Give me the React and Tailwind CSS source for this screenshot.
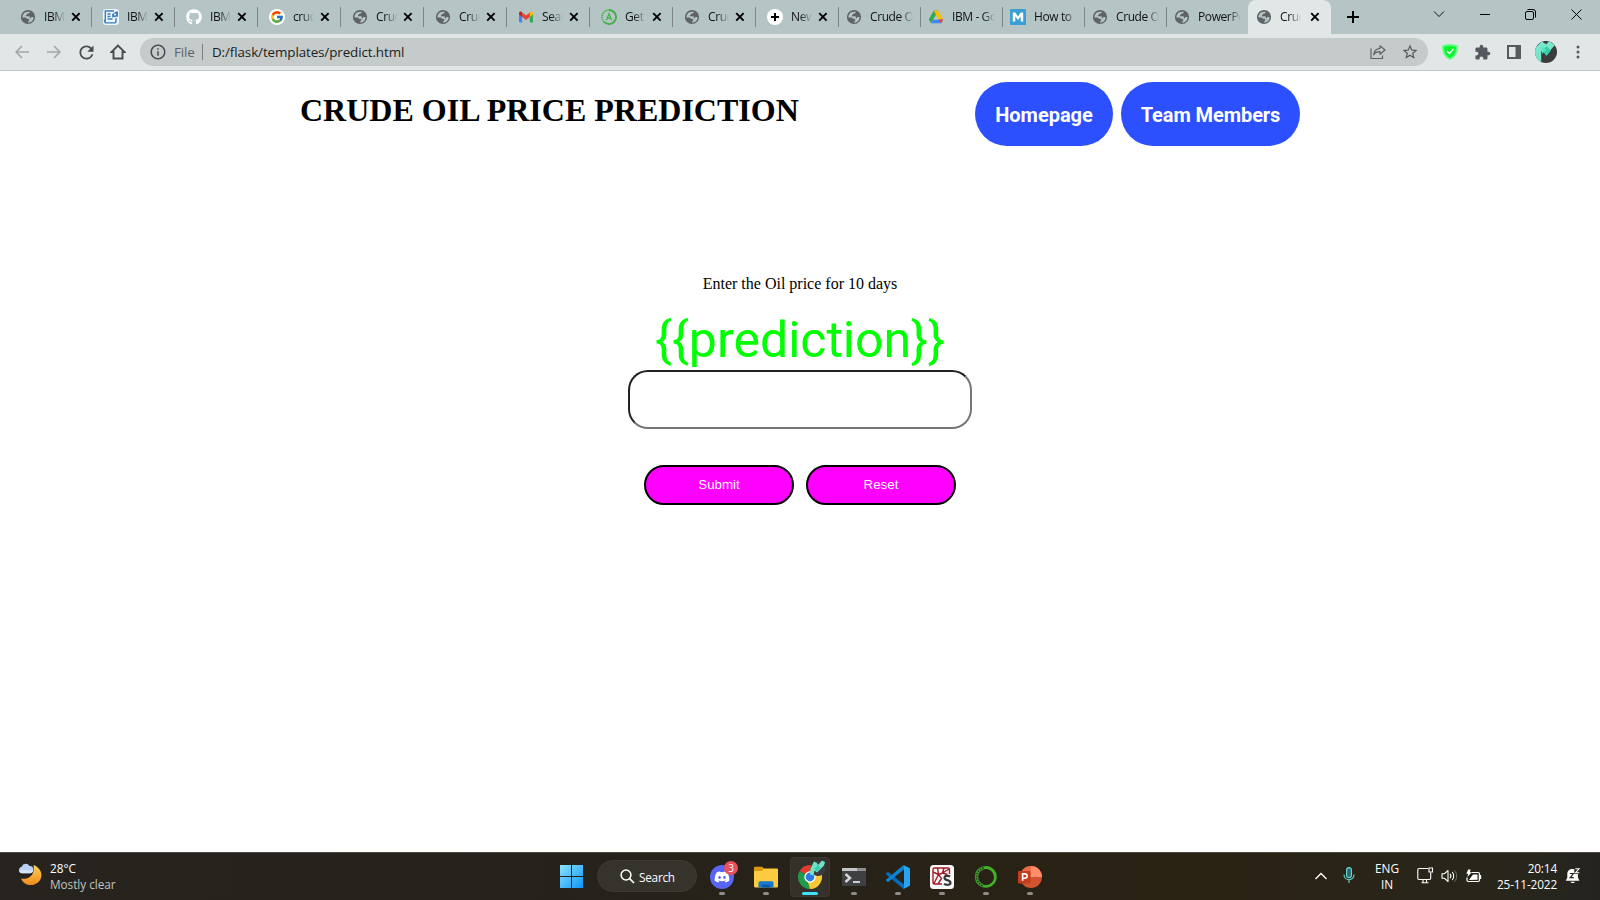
import React from "react";
import { FcGoogle } from "react-icons/fc";
import { FaGithub, FaDiscord } from "react-icons/fa";
import { MdExtension, MdStarBorder, MdRefresh, MdOutlineInfo } from "react-icons/md";

const Globe = () => (
  <svg width="16" height="16" viewBox="0 0 16 16">
    <circle cx="8" cy="8" r="7.1" fill="#5f6368" />
    <path
      d="M9.600 2.800C9.800 3.900 9 4.600 8.200 4.600H7.300C7.300 5.600 6.800 6 6 6V7.200H8.700C9.500 7.200 9.900 7.700 9.900 8.500V9.200C10.900 9.200 11.300 8.700 11.300 7.900H13.500C13.700 11 11.300 13.500 8.100 13.600V12.300C8.900 12.200 9.300 11.700 9.300 10.900C9.300 10.100 8.700 9.700 7.900 9.700H7.200C6.500 9.700 6.100 9.300 6.100 8.600H2.500C2.200 5.200 5 2 9.600 2.800Z"
      fill="#b5c5c5"
    />
  </svg>
);

const Scroll = () => (
  <svg width="16" height="16" viewBox="0 0 16 16">
    <rect width="16" height="16" rx="3" fill="#eef5fb" />
    <path d="M11 2H2.3v9.5H1.5c0 1.6.8 2.4 2 2.4h7.7c1.2 0 1.8-.8 1.8-2V9" fill="none" stroke="#3b7fc0" strokeWidth="1.4" />
    <path d="M4.5 5h3M4.5 7.5h3M4.5 10h5" stroke="#3b7fc0" strokeWidth="1.3" />
    <path d="M9 5.2L13 2.4h2v5.4h-2L9.3 8.5z" fill="#3b7fc0" />
    <circle cx="12" cy="5.4" r="1" fill="#fff" />
  </svg>
);

const Github = () => (
  <FaGithub size={16} color="#fff" />
);

const Google = () => (
  <span className="flex size-4 items-center justify-center rounded-full bg-white">
    <FcGoogle size={14} />
  </span>
);

const Gmail = () => (
  <svg width="16" height="16" viewBox="0 0 16 16">
    <path d="M1 4v8.5c0 .6.4 1 1 1h2.2V7z" fill="#4285f4" />
    <path d="M15 4v8.5c0 .6-.4 1-1 1h-2.2V7z" fill="#34a853" />
    <path d="M11.8 4v4L15 5.6V4.2c0-1.6-1.6-2.1-2.6-1.3z" fill="#fbbc04" />
    <path d="M4.2 8V3.6L8 6.5l3.8-2.9V8L8 10.9z" fill="#ea4335" />
    <path d="M1 4.2v1.4L4.2 8V3.6l-.6-.7C2.6 2.1 1 2.6 1 4.2z" fill="#c5221f" />
  </svg>
);

const CircleA = () => (
  <svg width="16" height="16" viewBox="0 0 16 16">
    <path d="M8 1a7 7 0 1 1-5 11.9" fill="none" stroke="#43b049" strokeWidth="1.9" />
    <path d="M3 12.9A7 7 0 0 1 8 1" fill="none" stroke="#43b049" strokeWidth="1.7" strokeDasharray="1.3 .8" />
    <path d="M5.4 11.3L8 4.7l2.6 6.6M6.4 9.2h3.2" fill="none" stroke="#43b049" strokeWidth="1.2" />
  </svg>
);

const PlusDot = () => (
  <svg width="16" height="16" viewBox="0 0 16 16">
    <circle cx="8" cy="8" r="8" fill="#fff" />
    <path d="M8 4v8M4 8h8" stroke="#000" strokeWidth="2" />
  </svg>
);

const Drive = () => (
  <svg width="16" height="16" viewBox="0 0 16 16">
    <path d="M5.6 1.7h4.8L8 5.9z" fill="#188038" />
    <path d="M10.4 1.7l4.9 8.7h-4.8L5.6 1.7z" fill="#fbbc04" />
    <path d="M5.6 1.7L8 5.9 3 14.3.8 10.4z" fill="#34a853" />
    <path d="M5.4 10.4h9.9L13 14.3H3z" fill="#4285f4" />
    <path d="M10.5 10.4h4.8L13 14.3z" fill="#ea4335" />
    <path d="M8 6.3l2.4 4.1H5.6z" fill="#b5c5c5" />
  </svg>
);

const MBox = () => (
  <svg width="16" height="16" viewBox="0 0 16 16">
    <rect width="16" height="16" fill="#3b9fd4" />
    <path d="M2.8 12.6V3.6h2.5L8 7.4l2.7-3.8h2.5v9h-2.5V7.6L8 11.1 5.3 7.6v5z" fill="#fff" />
  </svg>
);

const TABS = [
  ["IBM-", Globe, true],
  ["IBM-", Scroll, true],
  ["IBM-", Github, true],
  ["crude", Google, true],
  ["Crud", Globe, true],
  ["Crud", Globe, true],
  ["Sear", Gmail, true],
  ["Get s", CircleA, true],
  ["Crud", Globe, true],
  ["New", PlusDot, true],
  ["Crude Oil", Globe, false],
  ["IBM - Go", Drive, false],
  ["How to", MBox, false],
  ["Crude Oil", Globe, false],
  ["PowerPo", Globe, false],
];

const TabClose = () => (
  <svg width="10" height="10" viewBox="0 0 10 10" className="shrink-0">
    <path d="M1.2 1.2l7.4 7.4M8.6 1.2L1.2 8.6" stroke="#000" strokeWidth="1.9" />
  </svg>
);

const Title = ({ wide, children }) => (
  <span
    className={
      (wide ? "w-[43px]" : "w-[21px]") +
      " ml-2 shrink-0 overflow-hidden whitespace-nowrap text-[12px] leading-4 tracking-[-0.4px] text-[#111] [mask-image:linear-gradient(to_right,black_calc(100%-12px),transparent)]"
    }
  >
    {children}
  </span>
);

function Tab({ title, Icon, close }) {
  return (
    <div
      className={
        (close ? "w-[83px] pl-[11px]" : "w-[82px] pl-[7px]") +
        " flex h-full shrink-0 items-center"
      }
    >
      <span className="size-4 shrink-0"><Icon /></span>
      <Title wide={!close}>{title}</Title>
      {close && <span className="ml-[6px]"><TabClose /></span>}
      <span className="ml-auto h-5 w-px bg-[#7b8788]" />
    </div>
  );
}

function TabStrip() {
  return (
    <div className="flex h-[34px] bg-[#b5c5c5] pl-[9px]">
      {TABS.map(([t, I, c], i) => (
        <Tab key={i} title={t} Icon={I} close={c} />
      ))}
      <div className="-ml-[1px] flex h-full w-[83px] shrink-0 items-center rounded-t-lg bg-[#e1e6e6] pl-2">
        <Globe />
        <Title>Crude</Title>
        <span className="ml-[9px]"><TabClose /></span>
      </div>
      <svg width="12" height="12" viewBox="0 0 12 12" className="ml-4 mt-[11px]">
        <path d="M6 0v12M0 6h12" stroke="#000" strokeWidth="2" />
      </svg>
      <div className="ml-auto flex h-7">
        <span className="flex w-[46px] items-center justify-center">
          <svg width="12" height="8" viewBox="0 0 12 8"><path d="M1 1.5l5 5 5-5" fill="none" stroke="#111" /></svg>
        </span>
        <span className="flex w-[46px] items-center justify-center">
          <svg width="10" height="10"><path d="M0 5.5h10" stroke="#000" /></svg>
        </span>
        <span className="flex w-[46px] items-center justify-center">
          <svg width="11" height="11" viewBox="0 0 11 11" className="-ml-px">
            <rect x=".5" y="2.5" width="8" height="8" rx="1.5" fill="none" stroke="#000" />
            <path d="M2.5.5H8A2.5 2.5 0 0 1 10.500 3v5.500" fill="none" stroke="#000" />
          </svg>
        </span>
        <span className="flex w-[46px] items-center justify-center">
          <svg width="11" height="11" viewBox="0 0 11 11" className="-ml-px"><path d="M.5.5l10 10M10.500.5L.5 10.500" stroke="#000" /></svg>
        </span>
      </div>
    </div>
  );
}

function Toolbar() {
  return (
    <div className="flex h-[37px] items-center border-b border-[#c0c6c9] bg-[#e1e6e6]">
      <div className="flex w-[140px] shrink-0 items-center pl-[6px]">
        <span className="flex w-8 justify-center">
          <svg width="14" height="14" viewBox="0 0 14 14"><path d="M14 7H1.500M7 1L1.200 7 7 13" fill="none" stroke="#a4a8aa" strokeWidth="1.700" /></svg>
        </span>
        <span className="flex w-8 justify-center">
          <svg width="14" height="14" viewBox="0 0 14 14"><path d="M0 7h12.500M7 1l5.800 6L7 13" fill="none" stroke="#a4a8aa" strokeWidth="1.700" /></svg>
        </span>
        <span className="flex w-8 justify-center"><MdRefresh size={21} color="#494c4f" /></span>
        <span className="flex w-8 justify-center">
          <svg width="16" height="16" viewBox="0 0 16 16"><path d="M8 1.500L1.500 8H3.500v6.500h9V8h2z" fill="none" stroke="#494c4f" strokeWidth="1.900" /></svg>
        </span>
      </div>
      <div className="flex h-7 w-[1288px] shrink-0 items-center rounded-full bg-[#c5caca] pl-[9px] text-[13.4px] tracking-[-0.1px]">
        <MdOutlineInfo size={18} color="#484b4e" />
        <span className="ml-[7px] w-[28px] text-[#5f6368]">File</span>
        <span className="h-4 w-px bg-[#7c8082]" />
        <span className="ml-[9px] whitespace-nowrap text-[#1c1e20]">D:/flask/templates/predict.html</span>
        <svg width="16" height="16" viewBox="0 0 16 16" className="ml-auto">
          <path d="M1 4.500V14.500h11.500V11.500" fill="none" stroke="#5f6368" strokeWidth="1.200" />
          <path d="M10 1.800L15 6l-5 4.300V7.700C7 7.700 5 8.600 3.700 10.800 4 7.500 6 4.700 10 4.300z" fill="none" stroke="#5f6368" strokeWidth="1.200" strokeLinejoin="round" />
        </svg>
        <MdStarBorder size={18} color="#55585b" className="ml-[15px] mr-[9px]" />
      </div>
      <div className="flex flex-1 items-center pl-[6px]">
        <span className="flex w-8 justify-center">
          <svg width="16" height="16" viewBox="0 0 16 16">
            <path d="M8 .3C5.500.3 2.500.8.2 1.700 0 8 2 13 8 15.900 14 13 16 8 15.800 1.700 13.500.8 10.500.3 8 .3z" fill="#5dfc7c" />
            <path d="M8 2C6 2 4 2.300 2 2.900 2 7.500 3.500 11.500 8 14 12.500 11.500 14 7.500 14 2.900 12 2.300 10 2 8 2z" fill="#06f52f" />
            <path d="M5 7.200l2.500 2.300L11.500 5" fill="none" stroke="#fff" strokeWidth="1.500" />
          </svg>
        </span>
        <span className="flex w-8 justify-center"><MdExtension size={17} color="#56595d" /></span>
        <span className="flex w-8 justify-center">
          <svg width="14" height="14" viewBox="0 0 14 14"><rect x="1" y="1" width="12" height="12" fill="none" stroke="#56595d" strokeWidth="2" /><path d="M8.500 1h4.500v12H8.500z" fill="#56595d" /></svg>
        </span>
        <span className="flex w-8 justify-center"><Avatar size={22} /></span>
        <span className="flex w-8 justify-center">
          <svg width="4" height="14" viewBox="0 0 4 14"><circle cx="2" cy="2" r="1.500" fill="#55585b" /><circle cx="2" cy="7" r="1.500" fill="#55585b" /><circle cx="2" cy="12" r="1.500" fill="#55585b" /></svg>
        </span>
      </div>
    </div>
  );
}

const Avatar = ({ size }) => (
  <svg width={size} height={size} viewBox="0 0 22 22">
    <defs><clipPath id="avatar"><circle cx="11" cy="11" r="11" /></clipPath></defs>
    <g clipPath="url(#avatar)">
      <rect width="22" height="22" fill="#3c3b3d" />
      <path d="M0 7l7-7 5 5-5.500 5V22H0z" fill="#79e6cc" />
      <path d="M7 5l5-5 2 0 6 4-8 9-5-4z" fill="#79e6cc" />
      <path d="M8 0h6l-2.700 3.500z" fill="#3c3b3d" />
      <path d="M11.500 5L16 9.500l-4.500 5.500L7 9.500z" fill="#35d0aa" />
      <path d="M7 5l4 4-4 4z" fill="#5adfbf" />
      <path d="M6.700 11v11" stroke="#333" strokeWidth=".7" />
    </g>
  </svg>
);

function Page() {
  return (
    <main className="flex flex-1 flex-col bg-white">
      <header className="mx-auto flex w-[1000px] justify-between pt-[11px]">
        <h1 className="pt-[10px] font-['Liberation_Serif',serif] text-[32px] font-bold leading-[37px] text-black">
          CRUDE OIL PRICE PREDICTION
        </h1>
        <nav className="flex gap-2 font-[Roboto,sans-serif] text-[20px] font-bold tracking-[-0.02px] text-white">
          <a className="flex h-16 w-[138px] items-center justify-center rounded-[32px] bg-[#2d50ff] pt-px">Homepage</a>
          <a className="flex h-16 w-[179px] items-center justify-center rounded-[32px] bg-[#2d50ff] pt-px tracking-[-0.08px]">Team Members</a>
        </nav>
      </header>
      <form className="mt-[129px] flex flex-col items-center">
        <p className="font-['Liberation_Serif',serif] text-[16px] leading-[18px] text-black">Enter the Oil price for 10 days</p>
        <div className="mt-[19px] font-[Roboto,sans-serif] text-[50px] leading-[56px] text-[#00ff00]">{"{{prediction}}"}</div>
        <div className="mt-[2px] h-[59px] w-[344px] rounded-[20px] border-2 border-b-[#767676] border-l-[#212121] border-r-[#767676] border-t-[#212121] bg-white" />
        <div className="mt-9 flex gap-3 font-['Liberation_Sans',sans-serif] text-[13.333px] text-white">
          <button type="button" className="h-10 w-[150px] rounded-[20px] border-2 border-black bg-[#ff00ff]">Submit</button>
          <button type="button" className="h-10 w-[150px] rounded-[20px] border-2 border-black bg-[#ff00ff]">Reset</button>
        </div>
      </form>
    </main>
  );
}

const TaskApp = ({ active, children }) => (
  <div
    className={
      (active ? "border-[#3c3831] bg-[#34312a]" : "border-transparent") +
      " mx-[2px] flex h-10 w-10 flex-col items-center rounded border"
    }
  >
    <span className="mt-[7px] flex size-6 items-center justify-center">{children}</span>
    <span className={(active ? "w-4 bg-[#3fe3fb]" : "w-[6px] bg-[#8f8d89]") + " mt-[3px] h-[3px] rounded-full"} />
  </div>
);

const Chrome = () => (
  <svg width="24" height="24" viewBox="0 0 24 24" className="overflow-visible">
    <path d="M12 12L1.600 6A12 12 0 0 1 22.400 6z" fill="#e33b2e" />
    <path d="M12 12L22.400 6A12 12 0 0 1 12 24z" fill="#fcc934" />
    <path d="M12 12v12A12 12 0 0 1 1.600 6z" fill="#1e9a4a" />
    <path d="M12 6.500h10.700l-6 8.200z" fill="#fcc934" />
    <path d="M16.800 14.700L12 24l-2-7z" fill="#fcc934" />
    <circle cx="12" cy="12" r="5.700" fill="#fff" />
    <circle cx="12" cy="12" r="4.400" fill="#2a7be8" />
    <circle cx="20" cy="3.500" r="7.500" fill="#3c3b3d" />
    <path d="M12.500 3.500L16-3.500l3 1.500 1 2 4-4.500 3 1.500-1 3.500-7 7-2.500-2-1 5-3.500-1z" fill="#6fe3c8" />
    <path d="M20 0l2.500 2.500-3.500 4-2.500-3z" fill="#35cfa9" />
  </svg>
);

const Folder = () => (
  <svg width="24" height="24" viewBox="0 0 24 24">
    <path d="M0 3c0-.8.5-1.300 1.300-1.300H8c1 0 1.500 1.700 2.500 2.300V8H0z" fill="#d99a12" />
    <path d="M0 6h8l2-2.500h12.700c.8 0 1.300.5 1.300 1.300v16.500c0 .8-.5 1.200-1.300 1.200H1.300C.5 22.500 0 22 0 21.300z" fill="#fccb40" />
    <path d="M4.500 22.500V18c0-1 .7-1.800 1.800-1.800h11.400c1.100 0 1.800.8 1.800 1.800v4.500z" fill="#1478cf" />
    <path d="M8 22.500v-2c0-.5.300-.8.800-.8h6.400c.5 0 .8.300.8.800v2z" fill="#0b57a4" />
  </svg>
);

const TerminalIcon = () => (
  <svg width="24" height="24" viewBox="0 0 24 24">
    <rect y="3" width="24" height="18" rx="1" fill="#3f4043" />
    <path d="M0 6V4c0-.6.400-1 1-1h22c.6 0 1 .4 1 1v2z" fill="#8d8f93" />
    <path d="M0 6V4c0-.6.400-1 1-1h14v3z" fill="#c4c5c8" />
    <path d="M3.500 9l4.500 4-4.500 4" fill="none" stroke="#d8d8d8" strokeWidth="2.400" />
    <path d="M11 17h7" stroke="#fff" strokeWidth="1.500" />
  </svg>
);

const Code = () => (
  <svg width="24" height="24" viewBox="0 0 24 24">
    <path d="M0 8.600L1.500 7.300c.3-.3.700-.3 1 0L18 19.500v4.300c-.5 0-1-.2-1.300-.5L.2 9.500c-.3-.3-.3-.6-.2-.9z" fill="#0a6cb8" />
    <path d="M0 15.400l1.500 1.300c.3.300.7.300 1 0L18 4.500V.2c-.5 0-1 .2-1.300.5L.2 14.500c-.3.300-.3.600-.2.900z" fill="#0f84cf" />
    <path d="M17 .3c.3-.2.700-.2 1 0l5 2.400c.6.300 1 .8 1 1.400v15.800c0 .6-.4 1.100-1 1.400l-5 2.400c-.3.200-.7.200-1 0 .7-.2 1-.700 1-1.400V1.700c0-.7-.3-1.200-1-1.400z" fill="#2ba3ee" />
  </svg>
);

const Spyder = () => (
  <svg width="24" height="24" viewBox="0 0 24 24">
    <rect width="24" height="24" rx="3.500" fill="#fafafa" />
    <path d="M3 4.500C3 3.500 3.500 3 4.500 3H18c1 0 1.500.5 1.500 1.500V9M12 19H4.500C3.500 19 3 18.500 3 17.500V4.500M7.500 3l1 6.500L4 18.500M14 3l-1.500 5L19 4M8.500 9.500L3 7M8.500 9.500l4-1.500 5 1.500M8.500 9.500L11.500 13.500 8 19" fill="none" stroke="#a51c24" strokeWidth="1.400" />
    <path d="M20 11.500c-1.500-1-5.500-1-5.500 1.400 0 2.800 6 1.600 6 4.800 0 2.600-4.500 2.500-6.500 1.200" fill="none" stroke="#34383c" strokeWidth="2.200" />
  </svg>
);

const Anaconda = () => (
  <svg width="24" height="24" viewBox="0 0 24 24">
    <path d="M9.500 2.900A9.400 9.400 0 1 1 8.500 20.700" fill="none" stroke="#43b02a" strokeWidth="2.800" />
    <path d="M9.500 2.900A9.400 9.400 0 0 0 8.500 20.700" fill="none" stroke="#3d9a29" strokeWidth="3.400" />
    <path d="M9.500 2.900A9.400 9.400 0 0 0 8.500 20.700" fill="none" stroke="#26251c" strokeWidth="1.300" strokeDasharray="1.200 1.500" />
  </svg>
);

const PowerPoint = () => (
  <svg width="24" height="24" viewBox="0 0 24 24">
    <circle cx="13" cy="12" r="11" fill="#d35230" />
    <path d="M13 1a11 11 0 0 0-11 11h11z" fill="#ed6c47" />
    <path d="M13 1a11 11 0 0 1 11 11H13z" fill="#ff8f6b" />
    <rect y="6" width="12.500" height="12.500" rx="1.200" fill="#c43e1c" />
    <path d="M4.600 15.700V8.900h2.200c3.200 0 3.200 4.300 0 4.300H4.600" fill="none" stroke="#fff" strokeWidth="1.600" />
  </svg>
);

function Taskbar() {
  return (
    <footer className="flex h-12 items-center border-t border-[#4a4841] bg-[linear-gradient(to_right,#27241f,#25221c_35%,#2a2213_75%,#28261c_95%,#24231f)] text-[11.8px] leading-4 text-white">
      <div className="flex w-[558px] items-center pl-[18px]">
        <svg width="24" height="24" viewBox="0 0 24 24" className="-mt-1">
          <defs><linearGradient id="moon" x2="0" y2="1"><stop stopColor="#ffd25a" /><stop offset="1" stopColor="#f08a1d" /></linearGradient></defs>
          <path d="M15.500 2c8 3 10.500 11.500 5 17-5 5-14.500 4-17.500-3.500 6 1.500 14.500-2 12.500-13.500z" fill="url(#moon)" />
          <path d="M4 10.200a3.300 3.300 0 0 1-.3-6.500A4.300 4.300 0 0 1 11.500 3a3.600 3.600 0 0 1 .5 7.200z" fill="#b8d0f4" />
          <path d="M4 10.200a3.300 3.300 0 0 1-3-3h14a3.300 3.300 0 0 1-3 3z" fill="#d5e4fb" />
        </svg>
        <div className="-mt-[2px] ml-2">
          <div>28°C</div>
          <div className="tracking-[-0.05px] text-[#c3c2c0]">Mostly clear</div>
        </div>
      </div>
      <svg width="23" height="23" viewBox="0 0 23 23" className="ml-[2px]">
        <defs><linearGradient id="win" x2="1" y2="1"><stop stopColor="#8be3fd" /><stop offset="1" stopColor="#0e94f5" /></linearGradient></defs>
        <path d="M0 0h11v11H0zM12 0h11v11H12zM0 12h11v11H0zM12 12h11v11H12z" fill="url(#win)" />
      </svg>
      <div className="-mt-px ml-[14px] mr-[3px] flex h-8 w-[100px] items-center rounded-full border border-[#3d3a33] bg-[#36332d] pl-[22px]">
        <svg width="15" height="15" viewBox="0 0 15 15"><circle cx="6" cy="6" r="4.900" fill="none" stroke="#fff" strokeWidth="1.500" /><path d="M9.600 9.600l4.400 4.400" stroke="#fff" strokeWidth="1.700" /></svg>
        <span className="ml-[4px] mt-px tracking-[-0.25px]">Search</span>
      </div>
      <TaskApp>
        <span className="relative flex size-6 items-center justify-center rounded-full bg-[#5865f2]">
          <FaDiscord size={16} color="#fff" />
          <span className="absolute -right-1 -top-1 flex size-[14px] items-center justify-center rounded-full bg-[#e8505b] text-[10px] leading-none">3</span>
        </span>
      </TaskApp>
      <TaskApp><Folder /></TaskApp>
      <TaskApp active><Chrome /></TaskApp>
      <TaskApp><TerminalIcon /></TaskApp>
      <TaskApp><Code /></TaskApp>
      <TaskApp><Spyder /></TaskApp>
      <TaskApp><Anaconda /></TaskApp>
      <TaskApp><PowerPoint /></TaskApp>
      <div className="-mt-[2px] ml-auto flex items-center">
        <svg width="12" height="8" viewBox="0 0 12 8"><path d="M.5 7L6 1.500 11.500 7" fill="none" stroke="#fff" strokeWidth="1.300" /></svg>
        <svg width="12" height="17" viewBox="0 0 12 17" className="ml-4">
          <rect x="3.600" y=".6" width="4.800" height="10" rx="2.400" fill="#2b6a69" stroke="#66dcd7" strokeWidth="1.100" />
          <path d="M1 7.500c0 7 10 7 10 0M6 12.900V16" fill="none" stroke="#66dcd7" strokeWidth="1.100" />
        </svg>
        <div className="ml-[18px] w-[28px] text-center"><div>ENG</div><div>IN</div></div>
        <svg width="17" height="17" viewBox="0 0 17 17" className="ml-4">
          <path d="M11 1.500H2C1.300 1.500.8 2 .8 2.700v8.600c0 .7.500 1.200 1.200 1.200h10.500c.7 0 1.200-.5 1.200-1.200V9M4.500 15.700h7M6 12.500v3M9.500 12.500v3M13.700 5.500v4" fill="none" stroke="#fff" strokeWidth="1.100" />
          <path d="M12 1h3.500v4H12z" fill="#29241a" stroke="#fff" strokeWidth="1.100" />
        </svg>
        <svg width="17" height="14" viewBox="0 0 17 14" className="ml-[7px]">
          <path d="M1 4.700h2.500L7 1.500v11L3.500 9.300H1z" fill="none" stroke="#fff" strokeWidth="1.100" strokeLinejoin="round" />
          <path d="M9 4.800c1 1.200 1 3.200 0 4.400M11.200 3c2 2.200 2 5.800 0 8" fill="none" stroke="#fff" strokeWidth="1.100" />
          <path d="M13.400 1.300c3 3.300 3 8.100 0 11.400" fill="none" stroke="#77746b" strokeWidth="1" />
        </svg>
        <svg width="17" height="14" viewBox="0 0 17 14" className="ml-[7px]">
          <path d="M6.500 3.500h6.700c.7 0 1.200.5 1.200 1.200v6.600c0 .7-.5 1.200-1.200 1.200H3.200c-.7 0-1.200-.5-1.200-1.200V8.500" fill="none" stroke="#fff" strokeWidth="1.200" />
          <path d="M4 11L8 5.500h4.500v5.300zM15 6h1.200v4H15zM3.200.5h2.300L5 3.200h1.800L2.300 8l.9-3.200H1.300z" fill="#fff" />
        </svg>
        <div className="ml-[15px] w-[60px] whitespace-nowrap text-right tracking-[-0.15px]"><div>20:14</div><div className="-ml-2">25-11-2022</div></div>
        <svg width="16" height="16" viewBox="0 0 16 16" className="ml-[8px] mr-[19px] overflow-visible">
          <path d="M7.500 1C4.300 1 2.300 3 2.300 6v3.500L.8 12.700h13.600L12.900 9.500V6C12.900 3 10.700 1 7.500 1z" fill="#fff" />
          <path d="M5.500 13.800h4.400c-.3 1.700-4.100 1.700-4.400 0z" fill="#fff" />
          <path d="M4.900 5.500h3.500L5.200 9.700h3.600M9.300 5.500l-.2 0" fill="none" stroke="#26221a" strokeWidth="1.200" />
          <path d="M9.300-.500H16V6H9.300z" fill="#26241d" />
          <path d="M10.300.8h3.700l-3.500 4h3.900" fill="none" stroke="#fff" strokeWidth="1.100" />
        </svg>
      </div>
    </footer>
  );
}

export default function App() {
  return (
    <div className="flex h-[900px] w-[1600px] flex-col overflow-hidden font-['Open_Sans','Noto_Sans',sans-serif]">
      <TabStrip />
      <Toolbar />
      <Page />
      <Taskbar />
    </div>
  );
}
